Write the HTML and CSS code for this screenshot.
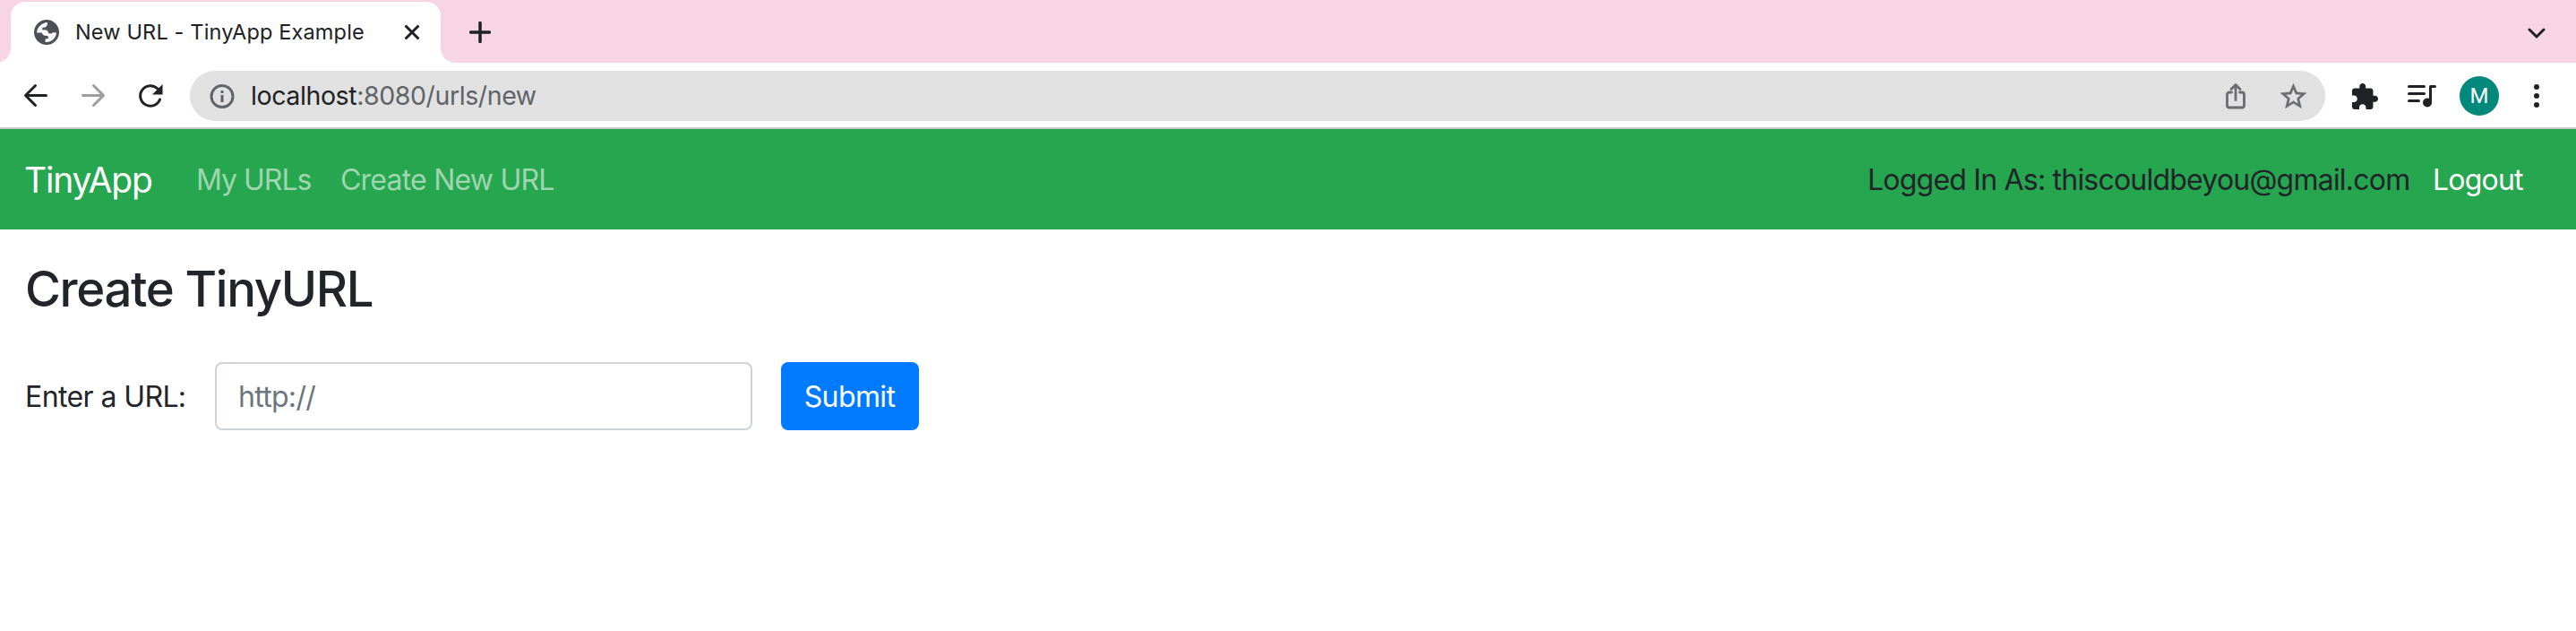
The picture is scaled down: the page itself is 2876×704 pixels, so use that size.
FILE: index.html
```html
<!DOCTYPE html>
<html lang="en">
<head>
<meta charset="utf-8">
<title>New URL - TinyApp Example</title>
<link rel="stylesheet" href="styles.css">
</head>
<body>
<header class="tabstrip">
  <div class="tab">
    <svg class="favicon" viewBox="2 2 20 20"><path fill="#4d5157" d="M12 2C6.480 2 2 6.480 2 12s4.480 10 10 10 10-4.480 10-10S17.520 2 12 2z"/><path fill="#fff" d="M4.200 12.400C4.500 8 8 4.400 12.600 4.100L12.600 6.300L11 8L8.800 8.200L8.500 10L11.500 10.200Q13.600 10.800 13.400 12.900L16.200 13L16.800 12.200L19.800 12.300C19.700 16.500 16 20 11 19.800L11 17.600L13.500 16.800L13 14.800L10.400 14.600Q8.600 14 8.300 12.400Z"/></svg>
    <span class="tab-title">New URL - TinyApp Example</span>
    <svg class="close" viewBox="0 0 16 16"><path d="M1.500 1.500l13 13M14.500 1.500l-13 13"/></svg>
  </div>
  <svg class="plus" viewBox="0 0 24 24"><path d="M12 1.500v21M1.500 12h21"/></svg>
  <svg class="chevron" viewBox="0 0 20 12"><path d="M2 2l8 8 8-8"/></svg>
</header>
<div class="toolbar">
  <svg class="nav-icon" viewBox="0 0 28 28"><path d="M25.500 13.500H3M13.500 2.500L2.500 13.500l11 11"/></svg>
  <svg class="nav-icon disabled" viewBox="0 0 28 28"><path d="M2.500 13.500H25M14.500 2.500l11 11-11 11"/></svg>
  <svg class="nav-icon" viewBox="0 0 28 28"><path d="M24.500 18A11.300 11.300 0 1 1 22 6"/><path class="solid" d="M27.500 1v11.500h-11.500z"/></svg>
  <div class="omnibox">
    <svg class="info" viewBox="0 0 28 28"><circle cx="14" cy="14.500" r="12"/><path d="M14 13v8M14 8v3"/></svg>
    <span class="url"><b>localhost</b>:8080/urls/new</span>
    <svg class="share" viewBox="0 0 22 30"><path d="M6.500 11H4a2.500 2.500 0 0 0-2.500 2.500v12A2.500 2.500 0 0 0 4 28h14a2.500 2.500 0 0 0 2.500-2.500v-12A2.500 2.500 0 0 0 18 11h-2.500M11 19.500V3M6 7.500l5-5 5 5"/></svg>
    <svg class="star" viewBox="2 2 20 19"><path d="M22 9.240l-7.190-.62L12 2 9.190 8.630 2 9.240l5.460 4.730L5.820 21 12 17.270 18.180 21l-1.630-7.030L22 9.240zM12 15.400l-3.760 2.270 1-4.280-3.320-2.880 4.380-.38L12 6.100l1.710 4.040 4.380.38-3.320 2.880 1 4.280L12 15.400z"/></svg>
  </div>
  <svg class="puzzle" viewBox="2 1 21 21"><path d="M20.500 11H19V7c0-1.100-.9-2-2-2h-4V3.500C13 2.120 11.880 1 10.500 1S8 2.120 8 3.500V5H4c-1.100 0-1.990.9-1.990 2v3.800H3.500c1.490 0 2.700 1.210 2.700 2.700s-1.210 2.700-2.700 2.700H2V20c0 1.100.9 2 2 2h3.800v-1.500c0-1.490 1.210-2.700 2.700-2.700 1.490 0 2.700 1.210 2.700 2.700V22H17c1.100 0 2-.9 2-2v-4h1.500c1.380 0 2.500-1.120 2.500-2.500S21.880 11 20.500 11z"/></svg>
  <svg class="music" viewBox="0 0 32 26"><path d="M1.500 2.500h17M1.500 10.500h17M1.500 18.500h11M25.500 20V2.500H30.500"/><circle cx="22" cy="20.500" r="5"/></svg>
  <div class="avatar">M</div>
  <svg class="dots" viewBox="0 0 6 26"><circle cx="3" cy="3" r="3"/><circle cx="3" cy="13" r="3"/><circle cx="3" cy="23" r="3"/></svg>
</div>
<nav class="navbar">
  <a class="brand">TinyApp</a>
  <a class="link my-urls">My URLs</a>
  <a class="link create">Create New URL</a>
  <span class="user">Logged In As: thiscouldbeyou@gmail.com</span>
  <a class="logout">Logout</a>
</nav>
<main class="content">
  <h1>Create TinyURL</h1>
  <form class="form">
    <label for="url">Enter a URL:</label>
    <input id="url" type="text" placeholder="http://">
    <button type="button">Submit</button>
  </form>
</main>
</body>
</html>
```
FILE: styles.css
```css
* { box-sizing: border-box; }
body { margin: 0; background: #fff; color: #212529; font: 32px/48px Inter, "Liberation Sans", sans-serif; white-space: nowrap; }
svg { display: block; flex: none; fill: none; stroke-linecap: round; stroke-linejoin: round; }
.tabstrip { height: 70px; background: #f7d5e4; display: flex; align-items: flex-start; }
.tab { position: relative; width: 480px; height: 68px; margin: 2px 0 0 12px; padding: 0 24px 0 26px; border-radius: 16px 16px 0 0; background: #fff; display: flex; align-items: center; }
.tab::before, .tab::after { content: ""; position: absolute; bottom: 0; width: 16px; height: 16px; }
.tab::before { left: -16px; background: radial-gradient(circle at 0 0, transparent 15.500px, #fff 16px); }
.tab::after { right: -16px; background: radial-gradient(circle at 100% 0, transparent 15.500px, #fff 16px); }
.favicon { width: 28px; height: 28px; }
.tab-title { margin-left: 18px; font-size: 23.500px; letter-spacing: 0.160px; color: #202124; }
.close { width: 16px; height: 16px; margin-left: auto; stroke: #202124; stroke-width: 3; }
.plus { width: 24px; height: 24px; margin: 24px 0 0 32px; stroke: #202124; stroke-width: 3.500; }
.chevron { width: 20px; height: 12px; margin: 31px 34px 0 auto; stroke: #202124; stroke-width: 3; }
.toolbar { height: 74px; padding: 8px 41px 6px 26px; border-bottom: 2px solid #c8c8ca; display: flex; align-items: center; color: #202124; }
.nav-icon { width: 28px; height: 28px; margin-right: 36px; stroke: #202124; stroke-width: 3; }
.nav-icon .solid { fill: #202124; stroke: none; }
.disabled { stroke: #9d9d9d; }
.omnibox { flex: 1; height: 56px; margin-left: -6px; padding: 0 21px 0 22px; border-radius: 28px; background: #e1e1e1; display: flex; align-items: center; }
.info { width: 28px; height: 28px; stroke: #5f6368; stroke-width: 3; stroke-linecap: butt; }
.url { margin-left: 18px; font-size: 28.500px; letter-spacing: -0.400px; color: #5f6368; }
.url b { font-weight: 400; color: #202124; }
.share { width: 22px; height: 30px; margin-left: auto; stroke: #696b6e; stroke-width: 2.800; }
.star { width: 29px; height: 28px; margin-left: 39px; fill: #696b6e; stroke: #696b6e; stroke-width: 0.300; }
.puzzle { width: 29px; height: 29px; margin-left: 30px; fill: #202124; }
.music { width: 32px; height: 26px; margin-left: 33px; stroke: #202124; stroke-width: 3; }
.music circle { fill: #202124; stroke: none; }
.avatar { width: 44px; height: 44px; margin-left: 26px; border-radius: 50%; background: #00897b; color: #fff; font: 24px/45px Roboto, sans-serif; text-align: center; }
.dots { width: 6px; height: 26px; margin-left: 39px; fill: #202124; }
.navbar { height: 112px; background: #26a64f; padding: 2px 28px 0 27px; display: flex; align-items: center; letter-spacing: -0.780px; }
.brand { width: 192px; font-size: 39px; letter-spacing: -1.200px; color: #fff; }
.link { color: #9fd5af; }
.my-urls { width: 161px; letter-spacing: -1px; }
.user { margin-left: auto; width: 631px; }
.logout { width: 132px; color: #fff; }
.content { padding: 33px 28px; }
h1 { margin: 0 0 48px; font-size: 54.500px; line-height: 67px; font-weight: 550; letter-spacing: -1.350px; }
.form { display: flex; align-items: center; height: 76px; letter-spacing: -0.600px; }
label { width: 212px; padding-top: 1px; }
input { width: 600px; height: 76px; padding: 1px 24px 0; border: 2px solid #ced4da; border-radius: 8px; font: inherit; letter-spacing: -0.700px; background: #fff; }
input::placeholder { color: #6c757d; opacity: 1; }
button { width: 154px; height: 76px; margin-left: 32px; padding: 1px 1px 0 0; border: 0; border-radius: 8px; background: #007bff; color: #fff; font: inherit; letter-spacing: -0.600px; }
```
